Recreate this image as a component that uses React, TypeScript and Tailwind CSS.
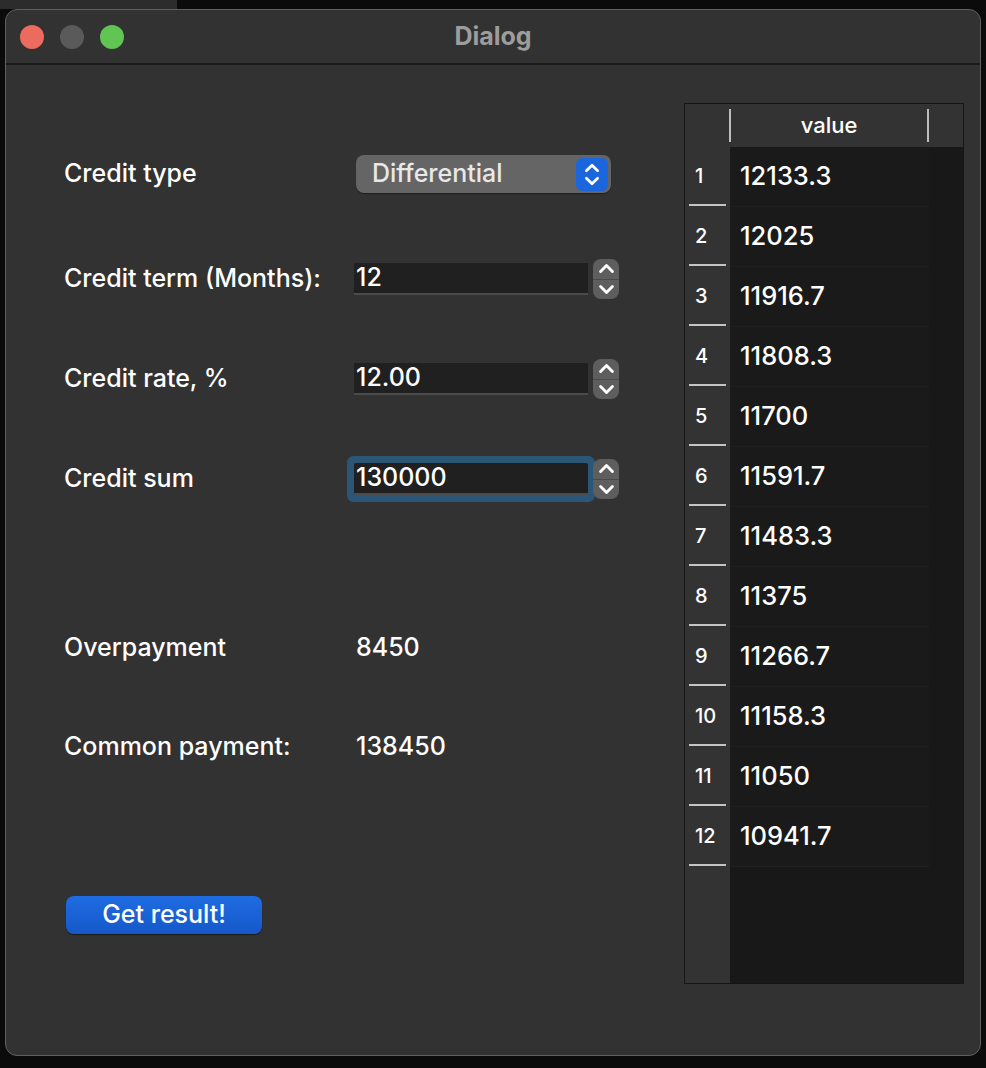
import React from 'react';

const font = { fontFamily: 'Inter, "Noto Sans", sans-serif' };

const payments = [
  '12133.3',
  '12025',
  '11916.7',
  '11808.3',
  '11700',
  '11591.7',
  '11483.3',
  '11375',
  '11266.7',
  '11158.3',
  '11050',
  '10941.7',
];

const ChevronUp = ({ size = 14 }: { size?: number }) => (
  <svg width={size} height={size} viewBox="0 0 16 16" fill="none">
    <path d="M3 10.5 L8 5.5 L13 10.5" stroke="white" strokeWidth="2.4" strokeLinecap="round" strokeLinejoin="round" />
  </svg>
);

const ChevronDown = ({ size = 14 }: { size?: number }) => (
  <svg width={size} height={size} viewBox="0 0 16 16" fill="none">
    <path d="M3 5.5 L8 10.5 L13 5.5" stroke="white" strokeWidth="2.4" strokeLinecap="round" strokeLinejoin="round" />
  </svg>
);

const Stepper = () => (
  <div className="ml-[5px] flex h-[40px] w-[26px] flex-col overflow-hidden rounded-[8px] bg-[#5e5e5e]">
    <div className="flex flex-1 items-center justify-center border-b border-[#4a4a4a]">
      <ChevronUp size={19} />
    </div>
    <div className="flex flex-1 items-center justify-center">
      <ChevronDown size={19} />
    </div>
  </div>
);

const SpinBox = ({ value, focused }: { value: string; focused?: boolean }) => (
  <div className="flex items-center">
    <div
      className={
        'flex h-[32px] w-[234px] items-center border-b-2 border-[#4b4b4b] bg-[#202020] pl-[2px] text-[25px] font-medium text-white ' +
        (focused ? 'rounded-[2px] ring-[7px] ring-[#2b5675]' : '')
      }
    >
      {value}
    </div>
    <Stepper />
  </div>
);

const Row = ({ label, className, children }: { label: string; className: string; children: React.ReactNode }) => (
  <div className={'flex h-[40px] items-center ' + className}>
    <div className="w-[292px] text-[25px] font-medium text-white">{label}</div>
    {children}
  </div>
);

export default function App() {
  return (
    <div className="relative h-[1068px] w-[986px] overflow-hidden bg-[#0b0b0b] pl-[5px] pt-[9px]" style={font}>
      {/* window behind */}
      <div className="absolute left-0 top-0 h-[9px] w-[177px] bg-[#2c2c2c]" />

      <div className="relative flex h-[1047px] w-[976px] flex-col overflow-hidden rounded-[12px] border border-[#5f5f5f] bg-[#323232]">
        {/* title bar */}
        <div className="relative flex h-[55px] shrink-0 items-center border-b-2 border-[#1a1a1a] pl-[14px]">
          <div className="flex gap-[16px]">
            <div className="h-[24px] w-[24px] rounded-full bg-[#ec6a5e]" />
            <div className="h-[24px] w-[24px] rounded-full bg-[#5a5a5a]" />
            <div className="h-[24px] w-[24px] rounded-full bg-[#61c554]" />
          </div>
          <div className="absolute inset-0 flex items-center justify-center text-[25px] font-bold text-[#9d9d9d]">
            Dialog
          </div>
        </div>

        {/* content */}
        <div className="flex flex-1">
          <div className="flex flex-1 flex-col pl-[58px]">
            <Row label="Credit type" className="mt-[89px]">
              <div className="flex h-[38px] w-[255px] items-center justify-between rounded-[8px] bg-[#656565] pl-[16px] pr-[3px] text-[25px] font-medium text-[#e8e8e8] shadow-[0_1px_1px_rgba(0,0,0,0.4)]">
                <span>Differential</span>
                <div className="flex h-[33px] w-[32px] flex-col items-center justify-center rounded-[6px] bg-[#1b66dc]">
                  <ChevronUp size={18} />
                  <div className="-mt-[5px]">
                    <ChevronDown size={18} />
                  </div>
                </div>
              </div>
            </Row>
            <Row label="Credit term (Months):" className="mt-[65px]">
              <div className="-ml-[2px]">
                <SpinBox value="12" />
              </div>
            </Row>
            <Row label="Credit rate, %" className="mt-[60px]">
              <div className="-ml-[2px]">
                <SpinBox value="12.00" />
              </div>
            </Row>
            <Row label="Credit sum" className="mt-[60px]">
              <div className="-ml-[2px]">
                <SpinBox value="130000" focused />
              </div>
            </Row>
            <Row label="Overpayment" className="mt-[129px]">
              <div className="text-[25px] font-medium text-white">8450</div>
            </Row>
            <Row label="Common payment:" className="mt-[59px]">
              <div className="text-[25px] font-medium text-white">138450</div>
            </Row>
            <div className="mt-[129px] pl-[2px]">
              <button className="flex h-[38px] w-[196px] items-center justify-center rounded-[8px] bg-gradient-to-b from-[#1f6ce2] to-[#1558c9] text-[25px] font-medium text-white shadow-[0_1px_1px_rgba(0,0,0,0.5)]">
                Get result!
              </button>
            </div>
          </div>

          {/* table */}
          <div className="mb-[71px] mr-[16px] mt-[38px] flex w-[280px] flex-col border border-[#151515] bg-[#181818]">
            <div className="flex h-[43px] shrink-0 bg-[#333333]">
              <div className="w-[44px]" />
              <div className="my-[5px] flex w-[200px] items-center justify-center border-x-2 border-[#bdbdbd] text-[22px] font-medium text-white">
                value
              </div>
            </div>
            <div className="flex flex-1">
              <div className="flex w-[45px] flex-col bg-[#333333]">
                {payments.map((_, i) => (
                  <div key={i} className="flex h-[60px] flex-col">
                    <div className="flex flex-1 items-center pl-[10px] text-[20px] font-medium text-white">{i + 1}</div>
                    <div className="mx-[4px] mb-[1px] h-[2px] bg-[#c4c4c4]" />
                  </div>
                ))}
              </div>
              <div className="flex flex-col">
                {payments.map((p) => (
                  <div
                    key={p}
                    className="flex h-[60px] w-[199px] items-center border-b border-[#202020] bg-[#1a1a1a] pl-[10px] text-[25.5px] font-medium text-white"
                  >
                    {p}
                  </div>
                ))}
              </div>
            </div>
          </div>
        </div>
      </div>
    </div>
  );
}
